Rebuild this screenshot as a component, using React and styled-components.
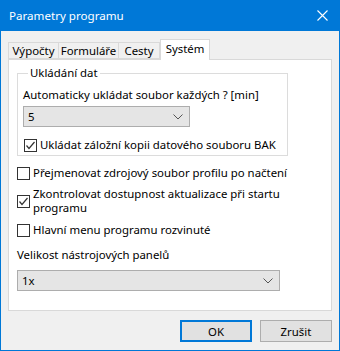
import React from "react"
import styled, { createGlobalStyle } from "styled-components"

const GlobalStyle = createGlobalStyle`
  body {
    margin: 0;
    font-family: "Noto Sans", "Open Sans", sans-serif;
    font-size: 11.4px;
    color: #000;
  }
`

const Window = styled.div`
  width: 340px;
  height: 351px;
  box-sizing: border-box;
  border: 1px solid #0078d7;
  border-top: none;
  background: #f0f0f0;
  display: flex;
  flex-direction: column;
`

const TitleBar = styled.div`
  height: 31px;
  margin: 0 -1px;
  background: #0078d7;
  color: #fff;
  display: flex;
  align-items: center;
  justify-content: space-between;
  padding: 0 12px 0 9px;
  font-size: 11.6px;
`

const Content = styled.div`
  flex: 1;
  padding: 8px 7px 0 7px;
  display: flex;
  flex-direction: column;
`

const TabStrip = styled.div`
  display: flex;
  align-items: flex-end;
  height: 20px;
  position: relative;
  z-index: 1;
`

const Tab = styled.div`
  box-sizing: border-box;
  width: ${p => p.$w}px;
  height: ${p => (p.$active ? 21 : 17)}px;
  margin-bottom: ${p => (p.$active ? -1 : 0)}px;
  border: 1px solid #d9d9d9;
  border-bottom: ${p => (p.$active ? "none" : "1px solid #d9d9d9")};
  border-left: ${p => (p.$first || p.$active ? "1px solid #d9d9d9" : "none")};
  background: ${p => (p.$active ? "#fff" : "#f0f0f0")};
  display: flex;
  align-items: center;
  justify-content: center;
  line-height: 15px;
  white-space: nowrap;
  padding-bottom: ${p => (p.$active ? 3 : 0)}px;
`

const Panel = styled.div`
  box-sizing: border-box;
  height: 252px;
  background: #fff;
  border: 1px solid #d9d9d9;
  padding: 5px 8px 0 8px;
  display: flex;
  flex-direction: column;
`

const Group = styled.fieldset`
  box-sizing: border-box;
  width: 271px;
  margin: 0;
  padding: 6px 5px 3px 5px;
  border: 1px solid #dcdcdc;
  min-width: 0;
`

const Legend = styled.legend`
  margin-left: 5px;
  padding: 0 2px;
  line-height: 16px;
`

const Label = styled.div`
  line-height: 15px;
  white-space: nowrap;
  margin-top: ${p => p.$mt || 0}px;
`

const Select = styled.div`
  box-sizing: border-box;
  width: ${p => p.$w}px;
  height: 21px;
  margin-top: ${p => p.$mt || 0}px;
  background: #e5e5e5;
  border: 1px solid #adadad;
  display: flex;
  align-items: center;
  justify-content: space-between;
  padding: 0 6px 0 4px;
`

const Checks = styled.div`
  display: flex;
  flex-direction: column;
  gap: 7px;
  margin-top: 10px;
`

const CheckRow = styled.div`
  display: flex;
  align-items: center;
  gap: 3px;
  margin-top: ${p => p.$mt || 0}px;
  padding-left: ${p => p.$pl || 0}px;
  line-height: 14px;
  white-space: nowrap;
`

const Box = styled.span`
  flex: none;
  width: 13px;
  height: 13px;
  box-sizing: border-box;
  border: 1px solid #333;
  background: #fff;
  display: flex;
  align-items: center;
  justify-content: center;
`

const Buttons = styled.div`
  display: flex;
  justify-content: flex-end;
  gap: 8px;
  margin-top: 9px;
`

const Button = styled.div`
  box-sizing: border-box;
  width: 72px;
  height: 22px;
  background: #e1e1e1;
  border: ${p => (p.$default ? "2px solid #0078d7" : "1px solid #adadad")};
  display: flex;
  align-items: center;
  justify-content: center;
`

const Chevron = () => (
  <svg width="10" height="6" viewBox="0 0 10 6">
    <polyline points="0.5,0.5 5,5 9.5,0.5" fill="none" stroke="#555" strokeWidth="1" />
  </svg>
)

const CloseIcon = () => (
  <svg width="11" height="11" viewBox="0 0 11 11">
    <path d="M0.5 0.5 L10.5 10.5 M10.5 0.5 L0.5 10.5" stroke="#fff" strokeWidth="1.1" />
  </svg>
)

const Check = ({ checked, children, ...rest }) => (
  <CheckRow {...rest}>
    <Box>
      {checked && (
        <svg width="11" height="11" viewBox="0 0 11 11">
          <polyline points="1.5,5.5 4,8.5 9.5,2" fill="none" stroke="#333" strokeWidth="1.2" />
        </svg>
      )}
    </Box>
    <span>{children}</span>
  </CheckRow>
)

export default function App() {
  return (
    <>
      <GlobalStyle />
      <Window>
        <TitleBar>
          <span>Parametry programu</span>
          <CloseIcon />
        </TitleBar>
        <Content>
          <TabStrip>
            <Tab $w={51} $first>Výpočty</Tab>
            <Tab $w={60}>Formuláře</Tab>
            <Tab $w={41}>Cesty</Tab>
            <Tab $w={50} $active>Systém</Tab>
          </TabStrip>
          <Panel>
            <Group>
              <Legend>Ukládání dat</Legend>
              <Label>Automaticky ukládat soubor každých ? [min]</Label>
              <Select $w={167} $mt={4}>
                <span>5</span>
                <Chevron />
              </Select>
              <Check checked $mt={11} $pl={1}>Ukládat záložní kopii datového souboru BAK</Check>
            </Group>
            <Checks>
              <Check>Přejmenovat zdrojový soubor profilu po načtení</Check>
              <Check checked>
                Zkontrolovat dostupnost aktualizace při startu
                <br />
                programu
              </Check>
              <Check $mt={1}>Hlavní menu programu rozvinuté</Check>
            </Checks>
            <Label $mt={10}>Velikost nástrojových panelů</Label>
            <Select $w={263} $mt={8}>
              <span>1x</span>
              <Chevron />
            </Select>
          </Panel>
          <Buttons>
            <Button $default>OK</Button>
            <Button>Zrušit</Button>
          </Buttons>
        </Content>
      </Window>
    </>
  )
}
